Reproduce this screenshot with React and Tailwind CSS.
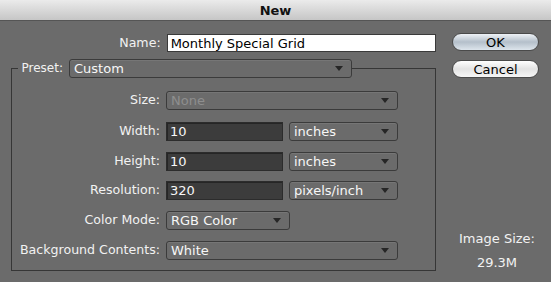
import React from "react"

const font = { fontFamily: '"DejaVu Sans", "Liberation Sans", sans-serif' }

function Arrow() {
    return <svg width="8" height="5" viewBox="0 0 8 5" className="shrink-0">
        <path d="M0 0 H8 L4 5 Z" fill="#262626" />
    </svg>
}

function Dropdown({ value, width, disabled }) {
    return <div className={`${width} shrink-0 h-[19px] flex items-center justify-between pl-[4px] pr-[8px] rounded-[3px] border border-[#3b3b3b] bg-[#6b6b6b] shadow-[inset_0_1px_0_rgba(255,255,255,0.08)]`}>
        <span className={`text-[13px] leading-none ${disabled ? "text-[#8e8e8e]" : "text-[#f7f7f7]"}`}>{value}</span>
        <Arrow />
    </div>
}

function TextField({ value }) {
    return <div className="w-[117px] h-[19px] flex items-center pl-[3px] border border-[#2c2c2c] bg-[#3c3c3c] shadow-[inset_1px_1px_0_#262626]">
        <span className="text-[13px] leading-none text-[#f7f7f7]">{value}</span>
    </div>
}

function Row({ label, className = "", children }) {
    return <div className={`${className} flex items-center`}>
        <div className="w-[154px] pr-[6px] text-right text-[12.6px] text-[#f2f2f2] whitespace-nowrap">{label}</div>
        <div className="flex items-center gap-[6px]">{children}</div>
    </div>
}

function AquaButton({ children, isDefault }) {
    return <div className={`w-[87px] h-[18px] rounded-full border border-[#4a4a4a] flex items-center justify-center text-[13px] text-black leading-none ${isDefault ? "bg-gradient-to-b from-[#eef2f6] via-[#b4bfca] to-[#dde5ec]" : "bg-gradient-to-b from-[#ffffff] via-[#e3e3e3] to-[#f6f6f6]"}`}>
        {children}
    </div>
}

export default function App() {
    return <div style={font} className="w-[551px] h-[282px] bg-[#6b6b6b] flex flex-col overflow-hidden">
        <div className="h-[21px] shrink-0 bg-gradient-to-b from-[#ebebeb] to-[#c6c6c6] border-b border-[#555] flex items-center justify-center">
            <span className="text-[13px] text-[#111] font-bold leading-none">New</span>
        </div>

        <div className="flex flex-1">
            <div className="w-[436px] shrink-0 pl-[11px]">
                <div className="mt-[13px] flex items-center">
                    <div className="w-[156px] pr-[6px] text-right text-[12.6px] text-[#f2f2f2]">Name:</div>
                    <div className="w-[270px] h-[18px] flex items-center pl-[3px] bg-white border border-[#3a3a3a]">
                        <span className="text-[13px] leading-none text-black">Monthly Special Grid</span>
                    </div>
                </div>

                <fieldset className="mt-[6px] w-[425px] border border-[#363636] pb-[10px]">
                    <legend className="ml-[6px] w-[334px] flex items-center">
                        <span className="flex-1 pr-[6px] text-right whitespace-nowrap text-[12px] text-[#f2f2f2]">Preset:</span>
                        <Dropdown value="Custom" width="w-[283px]" />
                    </legend>

                    <Row label="Size:" className="mt-[13px]">
                        <Dropdown value="None" width="w-[232px]" disabled />
                    </Row>
                    <Row label="Width:" className="mt-[12px]">
                        <TextField value="10" />
                        <Dropdown value="inches" width="w-[109px]" />
                    </Row>
                    <Row label="Height:" className="mt-[11px]">
                        <TextField value="10" />
                        <Dropdown value="inches" width="w-[109px]" />
                    </Row>
                    <Row label="Resolution:" className="mt-[10px]">
                        <TextField value="320" />
                        <Dropdown value="pixels/inch" width="w-[109px]" />
                    </Row>
                    <Row label="Color Mode:" className="mt-[11px]">
                        <Dropdown value="RGB Color" width="w-[124px]" />
                    </Row>
                    <Row label="Background Contents:" className="mt-[11px]">
                        <Dropdown value="White" width="w-[232px]" />
                    </Row>
                </fieldset>
            </div>

            <div className="flex-1 flex flex-col pl-[16px]">
                <div className="mt-[12px] flex flex-col gap-[9px]">
                    <AquaButton isDefault>OK</AquaButton>
                    <AquaButton>Cancel</AquaButton>
                </div>
                <div className="mt-auto mb-[13px] w-[88px] ml-[1px] flex flex-col items-center gap-[11px] text-[13px] text-[#f2f2f2] leading-none">
                    <span className="whitespace-nowrap">Image Size:</span>
                    <span>29.3M</span>
                </div>
            </div>
        </div>
    </div>
}
